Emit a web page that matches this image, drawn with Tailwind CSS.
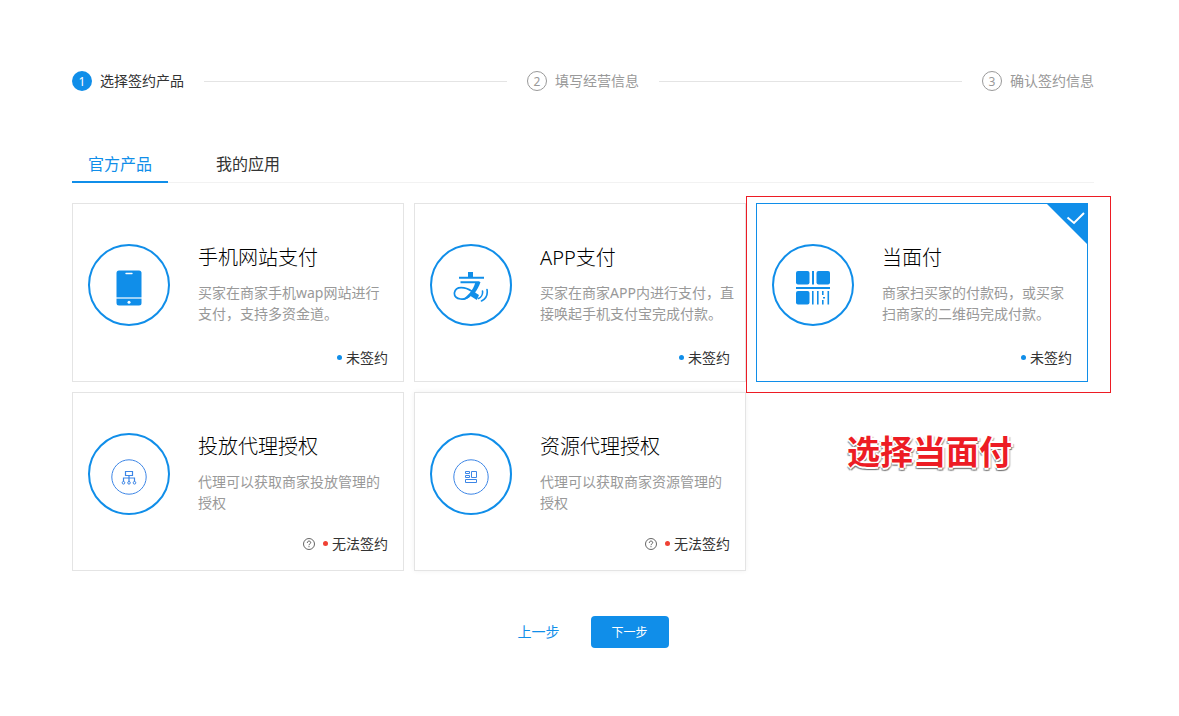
<!DOCTYPE html>
<html lang="zh-CN">
<head>
<meta charset="utf-8">
<meta name="viewport" content="width=device-width, initial-scale=1">
<title>选择签约产品</title>
<script src="https://cdn.jsdelivr.net/npm/@tailwindcss/browser@4"></script>
</head>
<body class="bg-white pt-[71px] pr-[85px] pb-16 pl-[72px] font-['Noto_Sans','Noto_Sans_CJK_SC',sans-serif] text-sm font-normal text-[#333]">

<!-- Progress steps -->
<ol class="flex h-5 items-center leading-5">
  <li class="flex flex-1 items-center">
    <span class="flex size-5 items-center justify-center rounded-full bg-[#108ee9] pt-0.5 text-xs text-white">1</span>
    <span class="ml-2 whitespace-nowrap">选择签约产品</span>
    <span class="mx-5 h-px flex-1 bg-[#e4e4e4]"></span>
  </li>
  <li class="flex flex-1 items-center text-[#999]">
    <span class="flex size-5 items-center justify-center rounded-full border border-[#999] pt-0.5 text-xs">2</span>
    <span class="ml-2 whitespace-nowrap">填写经营信息</span>
    <span class="mx-5 h-px flex-1 bg-[#e4e4e4]"></span>
  </li>
  <li class="flex items-center text-[#999]">
    <span class="flex size-5 items-center justify-center rounded-full border border-[#999] pt-0.5 text-xs">3</span>
    <span class="ml-2 whitespace-nowrap">确认签约信息</span>
  </li>
</ol>

<!-- Tabs -->
<nav class="mt-14 flex gap-8 border-b border-[#f2f2f2] text-base">
  <a href="#official" class="-mb-px block h-9 border-b-2 border-[#108ee9] px-4 leading-[34px] text-[#108ee9]">官方产品</a>
  <a href="#apps" class="block h-[35px] px-4 leading-[34px]">我的应用</a>
</nav>

<!-- Product cards -->
<main class="mt-5 grid grid-cols-3 gap-[10px] pr-1.5">

  <label class="relative flex h-[179px] flex-col border border-[#e4e4e4] px-[15px] pt-9">
    <input type="radio" name="product" class="sr-only">
    <span class="flex">
      <span class="mt-1 flex size-[82px] shrink-0 items-center justify-center rounded-full border-2 border-[#108ee9]">
        <svg class="mt-1.5 size-9" viewBox="0 0 36 36"><rect x="5.500" y="0.500" width="25" height="35" rx="2.500" fill="#108ee9"/><path d="M5 28h26" stroke="#fff" stroke-width="1.200"/><path d="M15 3.500h6" stroke="#fff" stroke-width="1.400" stroke-linecap="round"/><circle cx="18" cy="32.200" r="1.500" fill="#fff"/></svg>
      </span>
      <span class="ml-7">
        <span class="block text-xl leading-9 font-light text-black">手机网站支付</span>
        <span class="mt-1.5 block w-[198px] leading-[21px] text-[#999]">买家在商家手机wap网站进行<br>支付，支持多资金道。</span>
      </span>
    </span>
    <span class="mt-[21px] flex items-center justify-end gap-1 leading-[21px]"><span class="size-[5px] rounded-full bg-[#108ee9]"></span>未签约</span>
  </label>

  <label class="relative flex h-[179px] flex-col border border-[#e4e4e4] px-[15px] pt-9">
    <input type="radio" name="product" class="sr-only">
    <span class="flex">
      <span class="mt-1 flex size-[82px] shrink-0 items-center justify-center rounded-full border-2 border-[#108ee9]">
        <svg class="mt-1.5 size-9" viewBox="0 0 36 36" fill="none" stroke="#108ee9"><path d="M15 2h5v5h-5z" fill="#108ee9" stroke="none"/><path d="M6 7.700h25M7.500 12.300h19" stroke-width="2"/><path d="M17.500 25C14.500 28.500 11 29.500 7.500 29C3 28.300 1 26 1.500 22.500C2.200 18.500 6 17 11 17.800C16 18.600 19.500 21.500 22 23.500" stroke-width="1.700"/><path d="M22.500 12h5C26 16.500 24 20 22 22.500L26 25L23.800 30L17.500 26C15 28.800 11.500 30.300 8 30C14 27 20 21 22.500 12Z" fill="#108ee9" stroke="none"/><path d="M29.500 21C30 24.500 28 27.500 25.500 28.500M34 19.500C35 25 32.500 29 28.500 31" stroke-width="1.600" stroke-linecap="round"/></svg>
      </span>
      <span class="ml-7">
        <span class="block text-xl leading-9 font-light text-black">APP支付</span>
        <span class="mt-1.5 block w-[198px] leading-[21px] text-[#999]">买家在商家APP内进行支付，直接唤起手机支付宝完成付款。</span>
      </span>
    </span>
    <span class="mt-[21px] flex items-center justify-end gap-1 leading-[21px]"><span class="size-[5px] rounded-full bg-[#108ee9]"></span>未签约</span>
  </label>

  <div class="relative">
    <label class="relative flex h-[179px] flex-col border border-[#108ee9] px-[15px] pt-9">
      <input type="radio" name="product" class="sr-only" checked>
      <svg class="absolute top-0 right-0 size-10" viewBox="0 0 40 40"><path d="M0 0h40v40z" fill="#108ee9"/><path d="M20.500 13.500l6.500 5.500L37 9" fill="none" stroke="#fff" stroke-width="2"/></svg>
      <span class="flex">
        <span class="mt-1 flex size-[82px] shrink-0 items-center justify-center rounded-full border-2 border-[#108ee9]">
          <svg class="mt-1.5 size-9" viewBox="0 0 36 36" fill="#108ee9"><rect x="1" y="1" width="13.500" height="13.500" rx="2"/><rect x="21.500" y="1" width="13.500" height="13.500" rx="2"/><rect x="1" y="21" width="13.500" height="13.500" rx="2"/><path d="M17 1h2v13.500h-2zM1 17h34v2H1zM17 21h1.600v13.500H17zM22 21h1.600v13.500H22zM27 21h1.600v4H27zM27 30h1.600v4.500H27zM32.500 21h1.600v13.500h-1.600zM28 27h2v1.500h-2z"/></svg>
        </span>
        <span class="ml-7">
          <span class="block text-xl leading-9 font-light text-black">当面付</span>
          <span class="mt-1.5 block w-[198px] leading-[21px] text-[#999]">商家扫买家的付款码，或买家<br>扫商家的二维码完成付款。</span>
        </span>
      </span>
      <span class="mt-[21px] flex items-center justify-end gap-1 leading-[21px]"><span class="size-[5px] rounded-full bg-[#108ee9]"></span>未签约</span>
    </label>
    <div class="pointer-events-none absolute -top-[7px] -right-[23px] -bottom-[11px] -left-[10px] z-10 border border-[#ed1c24]"></div>
  </div>

  <label class="relative flex h-[179px] flex-col border border-[#e4e4e4] px-[15px] pt-9">
    <input type="radio" name="product" class="sr-only" disabled>
    <span class="flex">
      <span class="mt-1 flex size-[82px] shrink-0 items-center justify-center rounded-full border-2 border-[#108ee9]">
        <svg class="mt-1.5 size-9" viewBox="0 0 36 36" fill="none" stroke="#3d86e6"><circle cx="18" cy="18" r="17.200" stroke-width="1"/><path d="M14.500 12.500h7v4h-7zM18 16.500v6M12.500 22.500v-3.500h11v3.500" stroke-width="1.200"/><g stroke-width="1"><circle cx="12.500" cy="23.800" r="1.300"/><circle cx="18" cy="23.800" r="1.300"/><circle cx="23.500" cy="23.800" r="1.300"/></g></svg>
      </span>
      <span class="ml-7">
        <span class="block text-xl leading-9 font-light text-black">投放代理授权</span>
        <span class="mt-1.5 block w-[198px] leading-[21px] text-[#999]">代理可以获取商家投放管理的<br>授权</span>
      </span>
    </span>
    <span class="mt-[18px] flex items-center justify-end gap-1 leading-[21px]"><svg class="mr-1 size-3" viewBox="0 0 12 12" fill="none" stroke="#555"><circle cx="6" cy="6" r="5.500" stroke-width=".9"/><path d="M4.300 4.800C4.300 2.500 7.700 2.600 7.700 4.600C7.700 5.800 6 5.900 6 7.200M6 8.200v1"/></svg><span class="size-[5px] rounded-full bg-[#f04134]"></span>无法签约</span>
  </label>

  <label class="relative flex h-[179px] flex-col border border-[#e4e4e4] px-[15px] pt-9 shadow-[0_0_5px_rgba(0,0,0,0.06)]">
    <input type="radio" name="product" class="sr-only" disabled>
    <span class="flex">
      <span class="mt-1 flex size-[82px] shrink-0 items-center justify-center rounded-full border-2 border-[#108ee9]">
        <svg class="mt-1.5 size-9" viewBox="0 0 36 36" fill="none" stroke="#3d86e6"><circle cx="18" cy="18" r="17.200" stroke-width="1"/><path d="M12.500 12.500h4v2h-4zM12.500 16.500h4v2h-4zM18.500 12.500h5v6h-5zM12.500 20.500h11v3h-11z" stroke-width="1"/></svg>
      </span>
      <span class="ml-7">
        <span class="block text-xl leading-9 font-light text-black">资源代理授权</span>
        <span class="mt-1.5 block w-[198px] leading-[21px] text-[#999]">代理可以获取商家资源管理的<br>授权</span>
      </span>
    </span>
    <span class="mt-[18px] flex items-center justify-end gap-1 leading-[21px]"><svg class="mr-1 size-3" viewBox="0 0 12 12" fill="none" stroke="#555"><circle cx="6" cy="6" r="5.500" stroke-width=".9"/><path d="M4.300 4.800C4.300 2.500 7.700 2.600 7.700 4.600C7.700 5.800 6 5.900 6 7.200M6 8.200v1"/></svg><span class="size-[5px] rounded-full bg-[#f04134]"></span>无法签约</span>
  </label>

  <p class="pt-9 pl-[91px] text-[33px] leading-[48px] font-bold whitespace-nowrap text-[#ed1c24] [text-shadow:-2px_0_0_#fff,2px_0_0_#fff,0_-2px_0_#fff,0_2px_0_#fff,1px_3px_1px_#777,-1px_3px_1px_#999,3px_1px_1px_#bbb]">选择当面付</p>
</main>

<!-- Actions -->
<footer class="mt-[45px] flex items-center justify-center gap-[31px] pl-5">
  <a href="#prev" class="text-[#108ee9]">上一步</a>
  <button type="button" class="h-8 w-[78px] rounded bg-[#108ee9] pt-0.5 text-xs text-white">下一步</button>
</footer>

</body>
</html>
